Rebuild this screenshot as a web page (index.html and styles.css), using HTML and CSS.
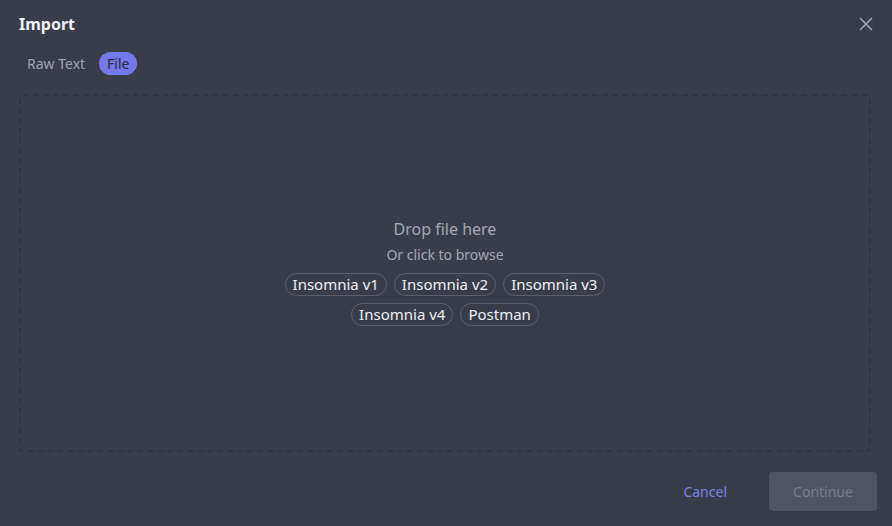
FILE: index.html
```html
<!DOCTYPE html>
<html>
<head>
<meta charset="utf-8">
<link rel="stylesheet" href="styles.css">
</head>
<body>
<div class="dialog">
  <div class="header">
    <h1 class="title">Import</h1>
    <button class="close" aria-label="Close">
      <svg width="14" height="14" viewBox="0 0 14 14"><path d="M1 1L13 13M13 1L1 13" stroke="#a6a9b0" stroke-width="1.5" fill="none"/></svg>
    </button>
  </div>
  <div class="tabs">
    <span class="tab">Raw Text</span>
    <span class="tab active">File</span>
  </div>
  <div class="dropzone">
    <div class="drop-title">Drop file here</div>
    <div class="drop-sub">Or click to browse</div>
    <div class="formats first">
      <span class="pill">Insomnia v1</span>
      <span class="pill">Insomnia v2</span>
      <span class="pill">Insomnia v3</span>
    </div>
    <div class="formats">
      <span class="pill">Insomnia v4</span>
      <span class="pill">Postman</span>
    </div>
  </div>
  <div class="footer">
    <button class="cancel">Cancel</button>
    <button class="continue">Continue</button>
  </div>
</div>
</body>
</html>
```
FILE: styles.css
```css
html, body {
  margin: 0;
  padding: 0;
  background: #393d4a;
  font-family: "Noto Sans", "Open Sans", sans-serif;
  color: #e5e7eb;
}
.dialog {
  width: 892px;
  height: 526px;
  box-sizing: border-box;
  padding: 12px 15px 15px 19px;
  display: flex;
  flex-direction: column;
}
.header {
  display: flex;
  align-items: center;
  justify-content: space-between;
  height: 24px;
}
.title {
  margin: 0;
  font-size: 16px;
  font-weight: 700;
  color: #f1f2f4;
  line-height: 24px;
}
.close {
  background: none;
  border: 0;
  padding: 0;
  width: 14px;
  height: 14px;
  margin-right: 4px;
  display: flex;
}
.tabs {
  display: flex;
  gap: 6px;
  margin-top: 16px;
}
.tab {
  font-size: 14px;
  line-height: 23px;
  padding: 0 8px;
  border-radius: 12px;
  color: #9ca3af;
}
.tab.active {
  background: #7379e8;
  color: #262b3a;
}
.dropzone {
  margin-top: 19px;
  width: 852px;
  height: 358px;
  box-sizing: border-box;
  padding-bottom: 4px;
  border: 2px dashed #2f3546;
  border-radius: 4px;
  display: flex;
  flex-direction: column;
  align-items: center;
  justify-content: center;
}
.drop-title {
  font-size: 16px;
  line-height: 24px;
  color: #a1a7b3;
}
.drop-sub {
  font-size: 14px;
  line-height: 20px;
  color: #a1a7b3;
  margin-top: 4px;
}
.formats {
  display: flex;
  gap: 7px;
  margin-top: 7px;
}
.formats.first {
  margin-top: 8px;
}
.pill {
  font-size: 15px;
  line-height: 19px;
  padding: 1px 7px;
  border: 1px solid #5e6068;
  border-radius: 12px;
  color: #eef0f2;
}
.footer {
  margin-top: auto;
  display: flex;
  justify-content: flex-end;
  align-items: center;
  gap: 26px;
}
.cancel {
  background: none;
  border: 0;
  font-family: inherit;
  font-size: 14px;
  color: #7880e6;
  padding: 0 16px;
  height: 39px;
}
.continue {
  font-family: inherit;
  font-size: 14px;
  width: 108px;
  height: 39px;
  border: 0;
  border-radius: 4px;
  background: #4f5461;
  color: #787d89;
}
```
